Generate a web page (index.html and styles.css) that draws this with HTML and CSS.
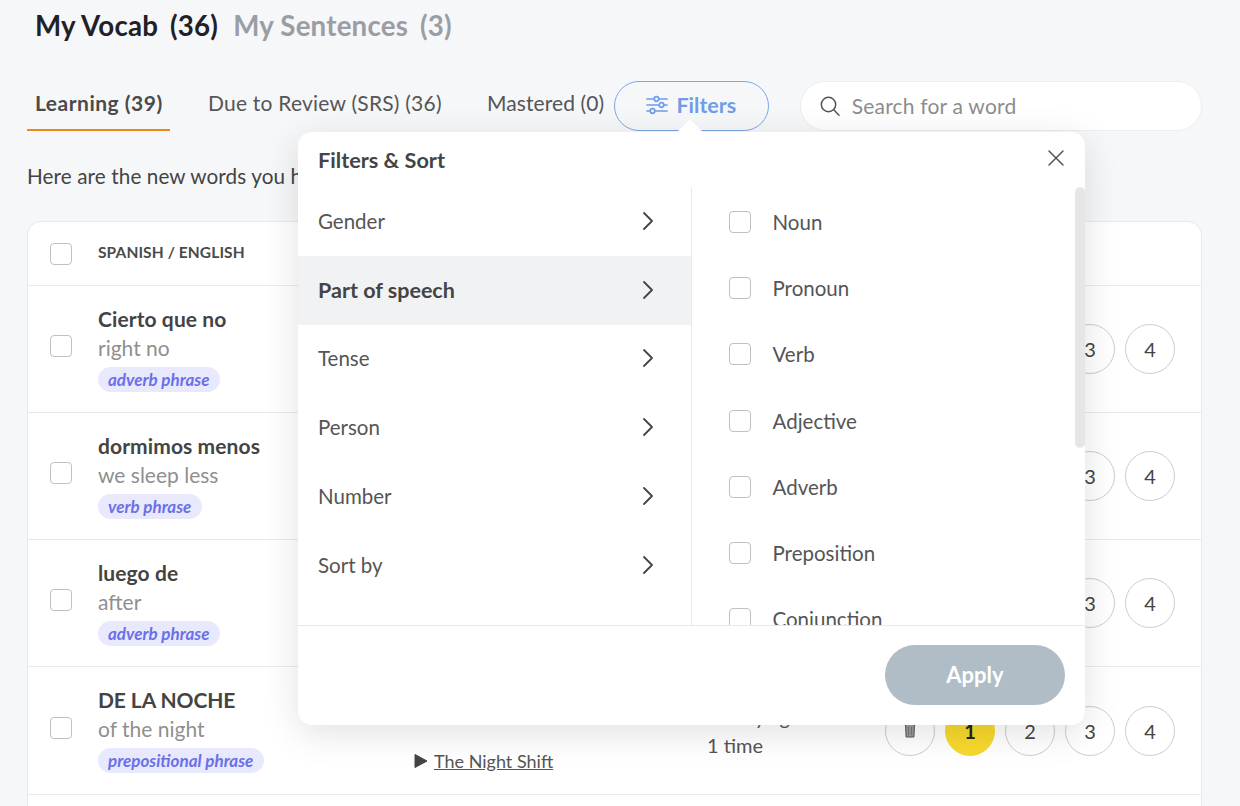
FILE: index.html
```html
<!DOCTYPE html>
<html lang="en">
<head>
<meta charset="utf-8">
<title>My Vocab</title>
<link rel="stylesheet" href="styles.css">
</head>
<body>
<div class="page">
  <div class="titles">
    <span class="title active">My Vocab <span class="count">(36)</span></span>
    <span class="title">My Sentences <span class="count">(3)</span></span>
  </div>

  <div class="toolbar">
    <div class="tabs">
      <div class="tab tab-learning current">Learning (39)</div>
      <div class="tab tab-due">Due to Review (SRS) (36)</div>
      <div class="tab tab-mastered">Mastered (0)</div>
    </div>
    <button class="filter-btn">
      <svg class="filter-icon" viewBox="0 0 22 20" width="22" height="20" fill="none" stroke="#6f9de9" stroke-width="1.7" stroke-linecap="round">
        <path d="M1 4h7M13 4h8M1 10h12M18 10h3M1 16h3M9 16h12"/>
        <circle cx="10.5" cy="4" r="2.3"/><circle cx="15.5" cy="10" r="2.3"/><circle cx="6.5" cy="16" r="2.3"/>
      </svg>
      <span class="filter-label">Filters</span>
    </button>
    <div class="search">
      <svg viewBox="0 0 22 22" width="22" height="22" fill="none" stroke="#555" stroke-width="1.5" stroke-linecap="round">
        <circle cx="9.5" cy="9.5" r="7.2"/><path d="M14.8 14.8l5.2 5.4"/>
      </svg>
      <span class="placeholder">Search for a word</span>
    </div>
  </div>

  <p class="intro">Here are the new words you have saved to review and practice.</p>

  <div class="table">
    <div class="thead">
      <span class="check"></span>
      <span class="th">SPANISH / ENGLISH</span>
    </div>

    <div class="row">
      <span class="check"></span>
      <div class="word"><div class="es">Cierto que no</div><div class="en">right no</div><span class="tag">adverb phrase</span></div>
      <div class="source"><svg class="play" viewBox="0 0 14 16" width="14" height="16"><path d="M1 1.5v13l12-6.5z" fill="#444" stroke="#444" stroke-linejoin="round"/></svg><span class="link">The Night Shift</span></div>
      <div class="stat">Seen 1 day ago<br>1 time</div>
      <div class="levels">
        <span class="lvl"><svg class="bin" viewBox="0 0 12 15" width="12" height="15"><path d="M1.5 1.5h9l-.6 12.5H2.100z" fill="#9a9a9a" stroke="#555"/><path d="M4.500 4v8M7.500 4v8" stroke="#777"/></svg></span>
        <span class="lvl on">1</span><span class="lvl">2</span><span class="lvl">3</span><span class="lvl">4</span>
      </div>
    </div>

    <div class="row">
      <span class="check"></span>
      <div class="word"><div class="es">dormimos menos</div><div class="en">we sleep less</div><span class="tag">verb phrase</span></div>
      <div class="source"><svg class="play" viewBox="0 0 14 16" width="14" height="16"><path d="M1 1.5v13l12-6.5z" fill="#444" stroke="#444" stroke-linejoin="round"/></svg><span class="link">The Night Shift</span></div>
      <div class="stat">Seen 1 day ago<br>1 time</div>
      <div class="levels">
        <span class="lvl"><svg class="bin" viewBox="0 0 12 15" width="12" height="15"><path d="M1.5 1.5h9l-.6 12.5H2.100z" fill="#9a9a9a" stroke="#555"/><path d="M4.500 4v8M7.500 4v8" stroke="#777"/></svg></span>
        <span class="lvl on">1</span><span class="lvl">2</span><span class="lvl">3</span><span class="lvl">4</span>
      </div>
    </div>

    <div class="row">
      <span class="check"></span>
      <div class="word"><div class="es">luego de</div><div class="en">after</div><span class="tag">adverb phrase</span></div>
      <div class="source"><svg class="play" viewBox="0 0 14 16" width="14" height="16"><path d="M1 1.5v13l12-6.5z" fill="#444" stroke="#444" stroke-linejoin="round"/></svg><span class="link">The Night Shift</span></div>
      <div class="stat">Seen 1 day ago<br>1 time</div>
      <div class="levels">
        <span class="lvl"><svg class="bin" viewBox="0 0 12 15" width="12" height="15"><path d="M1.5 1.5h9l-.6 12.5H2.100z" fill="#9a9a9a" stroke="#555"/><path d="M4.500 4v8M7.500 4v8" stroke="#777"/></svg></span>
        <span class="lvl on">1</span><span class="lvl">2</span><span class="lvl">3</span><span class="lvl">4</span>
      </div>
    </div>

    <div class="row">
      <span class="check"></span>
      <div class="word"><div class="es upper">DE LA NOCHE</div><div class="en">of the night</div><span class="tag">prepositional phrase</span></div>
      <div class="source"><svg class="play" viewBox="0 0 14 16" width="14" height="16"><path d="M1 1.5v13l12-6.5z" fill="#444" stroke="#444" stroke-linejoin="round"/></svg><span class="link">The Night Shift</span></div>
      <div class="stat">Seen 1 day ago<br>1 time</div>
      <div class="levels">
        <span class="lvl"><svg class="bin" viewBox="0 0 12 15" width="12" height="15"><path d="M1.5 1.5h9l-.6 12.5H2.100z" fill="#9a9a9a" stroke="#555"/><path d="M4.500 4v8M7.500 4v8" stroke="#777"/></svg></span>
        <span class="lvl on">1</span><span class="lvl">2</span><span class="lvl">3</span><span class="lvl">4</span>
      </div>
    </div>
  </div>

  <div class="popup">
    <span class="arrow"></span>
    <div class="popup-head">
      <span class="popup-title">Filters &amp; Sort</span>
      <svg class="close" viewBox="0 0 16 16" width="16" height="16" fill="none" stroke="#555" stroke-width="1.5" stroke-linecap="round"><path d="M1 1l14 14M15 1L1 15"/></svg>
    </div>
    <div class="popup-body">
      <ul class="cats">
        <li class="cat">Gender<svg class="chev" viewBox="0 0 12 20" width="12" height="20" fill="none" stroke="#444" stroke-width="1.8" stroke-linecap="round" stroke-linejoin="round"><path d="M2 2l8 8-8 8"/></svg></li>
        <li class="cat selected">Part of speech<svg class="chev" viewBox="0 0 12 20" width="12" height="20" fill="none" stroke="#444" stroke-width="1.8" stroke-linecap="round" stroke-linejoin="round"><path d="M2 2l8 8-8 8"/></svg></li>
        <li class="cat">Tense<svg class="chev" viewBox="0 0 12 20" width="12" height="20" fill="none" stroke="#444" stroke-width="1.8" stroke-linecap="round" stroke-linejoin="round"><path d="M2 2l8 8-8 8"/></svg></li>
        <li class="cat">Person<svg class="chev" viewBox="0 0 12 20" width="12" height="20" fill="none" stroke="#444" stroke-width="1.8" stroke-linecap="round" stroke-linejoin="round"><path d="M2 2l8 8-8 8"/></svg></li>
        <li class="cat">Number<svg class="chev" viewBox="0 0 12 20" width="12" height="20" fill="none" stroke="#444" stroke-width="1.8" stroke-linecap="round" stroke-linejoin="round"><path d="M2 2l8 8-8 8"/></svg></li>
        <li class="cat">Sort by<svg class="chev" viewBox="0 0 12 20" width="12" height="20" fill="none" stroke="#444" stroke-width="1.8" stroke-linecap="round" stroke-linejoin="round"><path d="M2 2l8 8-8 8"/></svg></li>
      </ul>
      <div class="opts">
        <div class="opt"><span class="check"></span>Noun</div>
        <div class="opt"><span class="check"></span>Pronoun</div>
        <div class="opt"><span class="check"></span>Verb</div>
        <div class="opt"><span class="check"></span>Adjective</div>
        <div class="opt"><span class="check"></span>Adverb</div>
        <div class="opt"><span class="check"></span>Preposition</div>
        <div class="opt"><span class="check"></span>Conjunction</div>
        <span class="scroll"></span>
      </div>
    </div>
    <div class="popup-foot"><button class="apply">Apply</button></div>
  </div>
</div>
</body>
</html>
```

FILE: styles.css
```css
* { box-sizing: border-box; }
html, body { margin: 0; height: 806px; overflow: hidden; }
body {
  background: #f6f7f9;
  color: #4a4a4a;
  font-family: "Lato", "Noto Sans", sans-serif;
}
.page { position: relative; height: 806px; overflow: hidden; padding: 0 38px 0 27px; }

.titles { display: flex; gap: 15px; padding: 8px 0 0 8px; height: 81px; }
.title { font-size: 27.7px; font-weight: 700; color: #9a9ea4; line-height: 36px; letter-spacing: .2px; white-space: nowrap; }
.title.active { color: #1f2126; }
.count { margin-left: 5px; }

.toolbar { display: flex; height: 50px; }
.tabs { display: flex; width: 587px; }
.tab { font-size: 21px; line-height: 43px; height: 50px; color: #555; letter-spacing: .22px; white-space: nowrap; padding-left: 8px; }
.tab-learning { width: 143px; letter-spacing: .5px; }
.tab-due { width: 309px; padding-left: 38px; }
.tab-mastered { width: 135px; letter-spacing: .1px; }
.tab.current { font-weight: 700; border-bottom: 2px solid #e9891c; color: #4a4a4a; }

.filter-btn {
  display: flex; align-items: center; justify-content: center; gap: 8px;
  width: 155px; height: 50px; border: 1px solid #7da6ea; border-radius: 25px;
  background: #f6f7f9; color: #6f9de9; font: 700 21.5px "Lato", sans-serif; padding: 0 0 2px;
}
.search {
  display: flex; align-items: center; gap: 11px;
  width: 403px; height: 50px; margin-left: 31px; padding: 0 18px 1px;
  background: #fff; border: 1px solid #eceef0; border-radius: 25px;
}
.placeholder { font-size: 21px; color: #8d8d8d; letter-spacing: .2px; }

.intro { margin: 0; height: 90px; padding-top: 32px; font-size: 20.7px; line-height: 26px; color: #444; letter-spacing: .1px; white-space: nowrap; }

.table { background: #fff; border: 1px solid #e7e9eb; border-radius: 14px; height: 600px; overflow: hidden; }
.thead { display: flex; align-items: center; height: 64px; padding: 0 0 3px 22px; border-bottom: 1px solid #e7e9eb; gap: 26px; }
.thead .check { margin-top: 3px; }
.th { font-size: 15.5px; font-weight: 700; letter-spacing: .1px; color: #4a4a4a; }

.check { display: block; flex: none; width: 22px; height: 22px; background: #fff; border: 1px solid #bfc1c3; border-radius: 4px; }

.row { display: flex; height: 127px; padding: 20px 26px 0 22px; border-bottom: 1px solid #e7e9eb; }
.row:last-child { height: 128px; }
.row > .check { align-self: center; margin: -26px 26px 0 0; }
.word { width: 316px; }
.es { font-size: 21px; font-weight: 700; line-height: 26px; color: #444; letter-spacing: .1px; white-space: nowrap; }
.es.upper { letter-spacing: -.1px; }
.en { font-size: 21px; line-height: 32px; color: #8f8f8f; white-space: nowrap; }
.tag {
  display: block; width: fit-content; height: 25px; padding: 0 11px 0 10px; margin-top: 3px;
  border-radius: 13px; background: #e8e9fd; color: #6a70e8;
  font-size: 17px; font-weight: 700; font-style: italic; line-height: 25px; white-space: nowrap;
}
.source { display: flex; align-items: center; gap: 6px; width: 240px; padding-top: 61px; height: 87px; font-size: 18px; color: #555; white-space: nowrap; }
.link { text-decoration: underline; }
.stat { width: 162px; padding-top: 16px; text-align: center; font-size: 20px; line-height: 28px; color: #555; white-space: nowrap; }
.levels { display: flex; gap: 10px; margin-left: auto; align-self: center; margin-top: -20px; }
.lvl { display: flex; align-items: center; justify-content: center; width: 50px; height: 50px; border: 1px solid #ccc; border-radius: 50%; font-size: 20px; color: #444; background: #fff; }
.lvl.on { background: #f8d92e; border-color: #f8d92e; font-weight: 700; color: #222; }

.popup {
  position: absolute; left: 298px; top: 132px; width: 787px; height: 593px;
  background: #fff; border-radius: 14px; box-shadow: 0 8px 36px rgba(0,0,0,.12);
  display: flex; flex-direction: column;
}
.arrow { position: absolute; left: 383px; top: -9px; width: 18px; height: 18px; background: #fff; transform: rotate(45deg); }
.popup-head { position: relative; display: flex; align-items: center; justify-content: space-between; height: 55px; padding: 0 21px 0 20px; }
.popup-title { font-size: 21.7px; font-weight: 700; color: #444; }
.close { margin-top: -4px; }
.popup-body { display: flex; height: 438px; }
.cats { list-style: none; margin: 0; padding: 0; width: 394px; border-right: 1px solid #ebebeb; flex: none; }
.cat { display: flex; align-items: center; justify-content: space-between; height: 68.8px; padding: 0 37px 1px 20px; font-size: 20.5px; color: #555; }
.cat.selected { background: #f1f2f3; font-size: 21.5px; font-weight: 700; color: #444; }
.opts { position: relative; flex: 1; overflow: hidden; padding-top: 2px; }
.opt { display: flex; align-items: center; gap: 22px; height: 66.2px; padding-left: 36.5px; font-size: 20.5px; color: #555; }
.scroll { position: absolute; right: 0; top: 0; width: 10px; height: 261px; background: #e6e6e6; border-radius: 5px; }
.popup-foot { display: flex; justify-content: flex-end; align-items: center; height: 100px; padding: 0 20px 2px 0; border-top: 1px solid #e7e9eb; }
.apply { width: 180px; height: 60px; border: 0; border-radius: 30px; background: #b0bcc6; color: #fff; font: 700 22px "Lato", sans-serif; }
```
